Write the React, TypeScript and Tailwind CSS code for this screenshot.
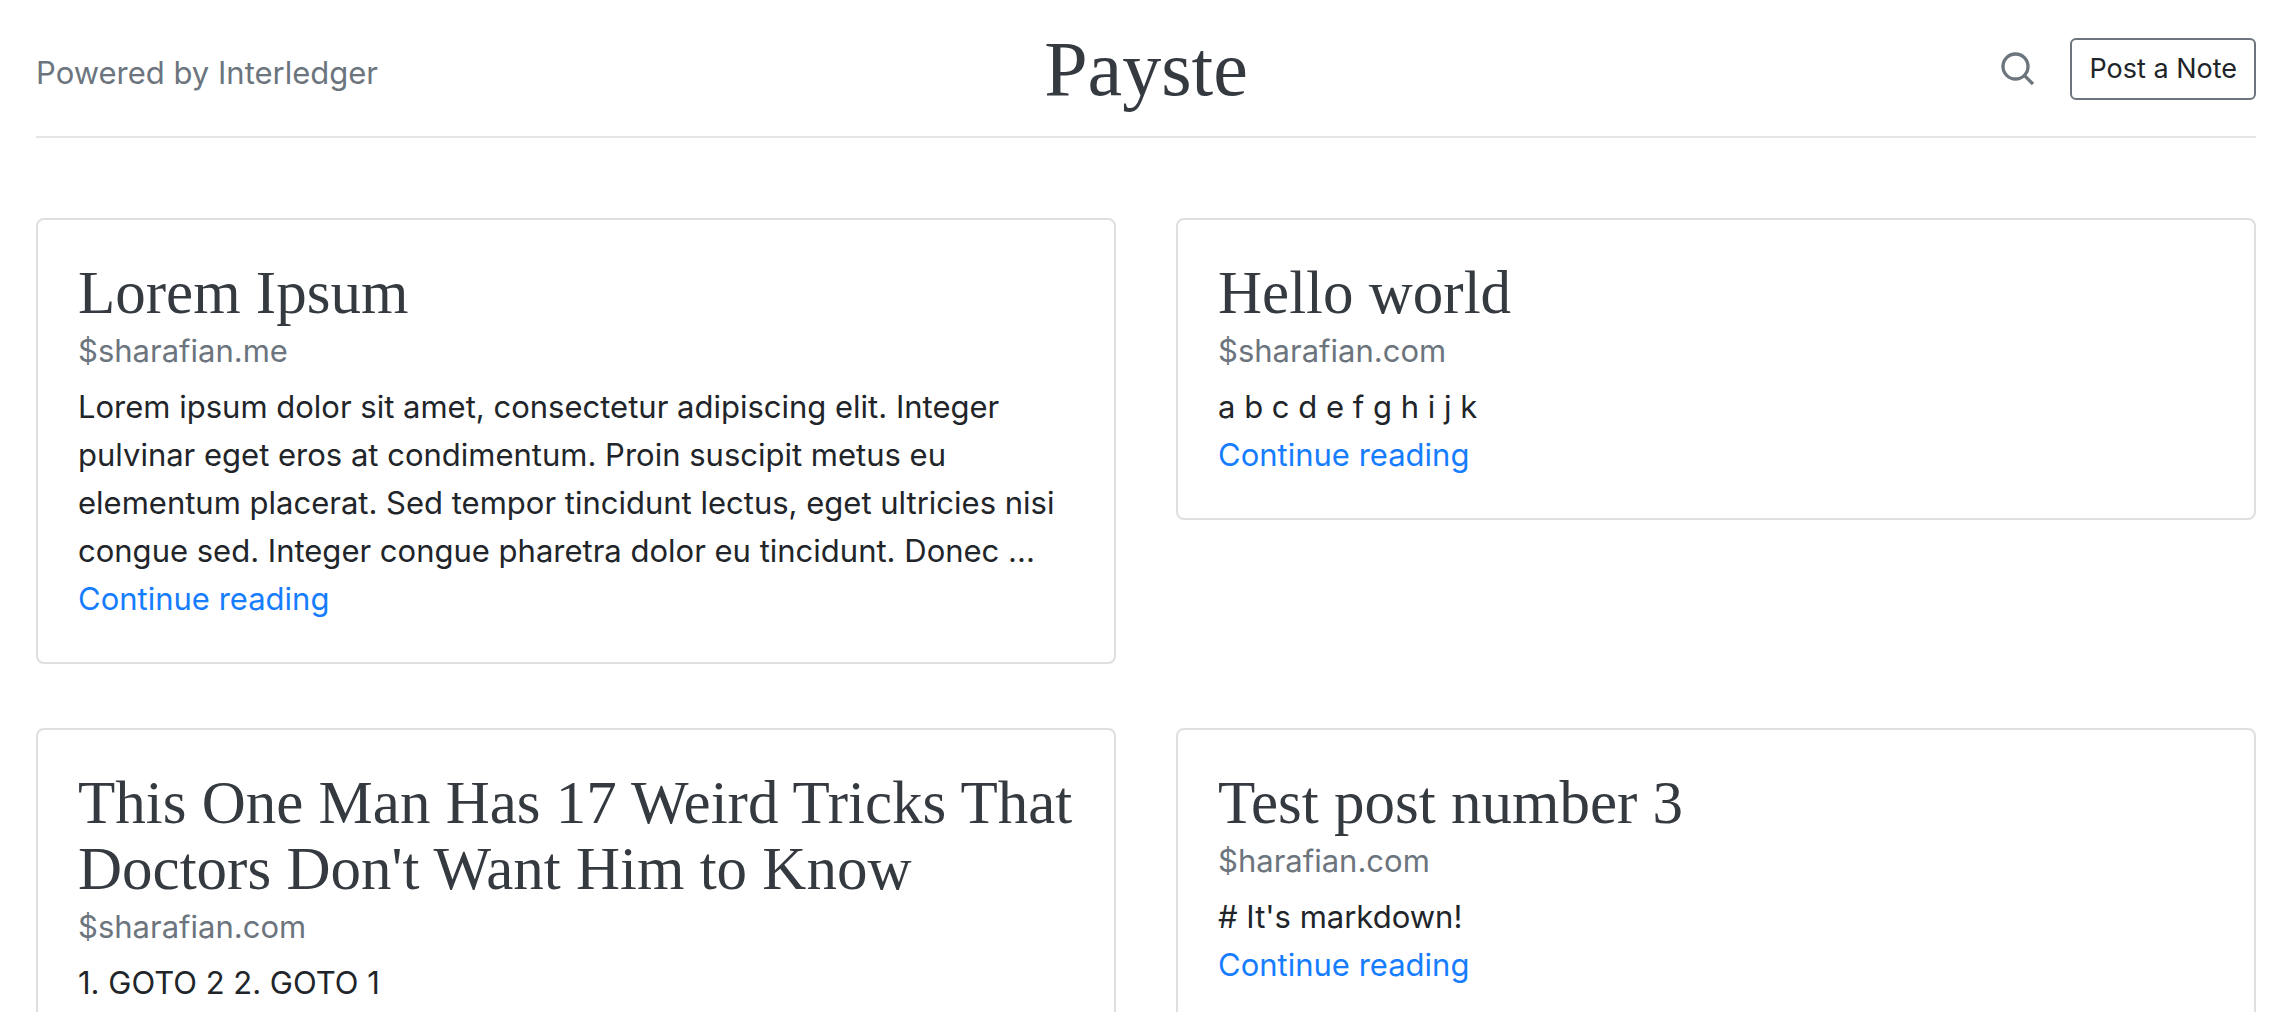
import React from "react";

type Post = { title: string; author: string; body: string };

const posts: Post[] = [
  {
    title: "Lorem Ipsum",
    author: "$sharafian.me",
    body: "Lorem ipsum dolor sit amet, consectetur adipiscing elit. Integer pulvinar eget eros at condimentum. Proin suscipit metus eu elementum placerat. Sed tempor tincidunt lectus, eget ultricies nisi congue sed. Integer congue pharetra dolor eu tincidunt. Donec ...",
  },
  { title: "Hello world", author: "$sharafian.com", body: "a b c d e f g h i j k" },
  {
    title: "This One Man Has 17 Weird Tricks That Doctors Don't Want Him to Know",
    author: "$sharafian.com",
    body: "1. GOTO 2 2. GOTO 1",
  },
  { title: "Test post number 3", author: "$harafian.com", body: "# It's markdown!" },
];

function SearchIcon() {
  return (
    <svg
      className="size-10"
      viewBox="0 0 24 24"
      fill="none"
      stroke="currentColor"
      strokeWidth="2"
      aria-hidden="true"
    >
      <circle cx="10.5" cy="10.5" r="7.5" />
      <line x1="21" y1="21" x2="15.8" y2="15.8" />
    </svg>
  );
}

function PostCard({ title, author, body }: Post) {
  return (
    <article className="self-start rounded-lg border-2 border-[#dfdfdf] px-10 pt-10 pb-[39px] text-[31px] leading-[48px]">
      <h2 className="mb-px font-['Liberation_Serif',serif] text-[61px] leading-[66px] text-[#343a40]">
        {title}
      </h2>
      <p className="text-[#6c757d]">{author}</p>
      <p className="mt-2 text-[#212529]">{body}</p>
      <a href="#" className="block text-[#167dff]">
        Continue reading
      </a>
    </article>
  );
}

export default function App() {
  return (
    <div className="h-screen overflow-hidden bg-white pr-[38px] pl-9 font-['Inter',sans-serif]">
      <header className="grid grid-cols-3 items-center border-b-2 border-[#e5e5e5] pt-[33px] pb-[31px]">
        <a href="#" className="pt-2 text-[31px] leading-[48px] text-[#6c757d]">
          Powered by Interledger
        </a>
        <h1 className="text-center font-['Liberation_Serif',serif] text-[78px] leading-[72px] text-[#343a40]">
          Payste
        </h1>
        <div className="flex items-center justify-end gap-8">
          <button type="button" aria-label="Search" className="text-[#6c757d]">
            <SearchIcon />
          </button>
          <button
            type="button"
            className="rounded-md border-2 border-[#6c757d] px-[17px] py-2 text-[27px] leading-[42px] text-[#212529]"
          >
            Post a Note
          </button>
        </div>
      </header>
      <main className="mt-20 grid grid-cols-2 gap-x-[60px] gap-y-16">
        {posts.map((post) => (
          <PostCard key={post.title} {...post} />
        ))}
      </main>
    </div>
  );
}
